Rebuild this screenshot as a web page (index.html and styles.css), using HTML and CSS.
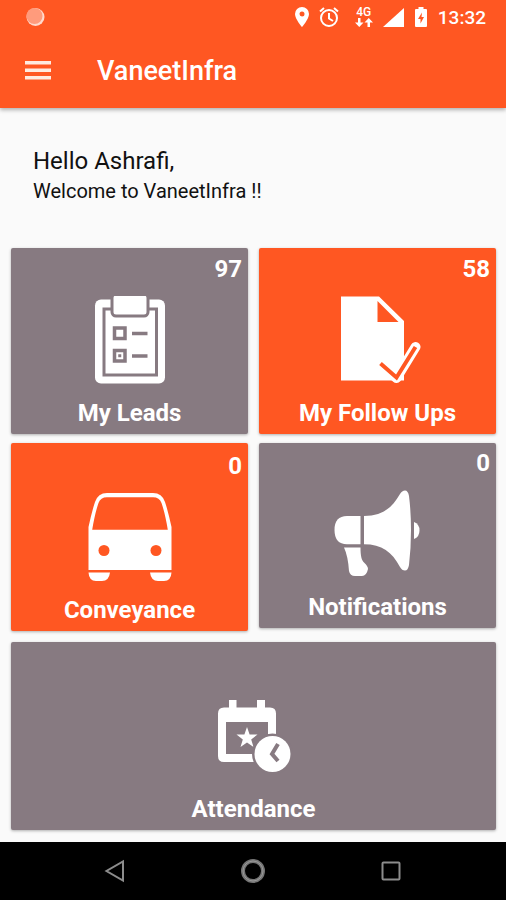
FILE: index.html
```html
<!DOCTYPE html>
<html lang="en">

<head>
    <meta charset="UTF-8">
    <meta name="viewport" content="width=device-width, initial-scale=1.0">
    <title>VaneetInfra</title>
    <link rel="stylesheet" href="styles.css">
</head>

<body>

    <header class="header">
        <div class="status-bar">
            <svg class="status-dot" width="20" height="20" viewBox="0 0 20 20">
                <circle cx="10.500" cy="10" r="9" fill="#ffd9cc"/>
                <circle cx="9.500" cy="9" r="8" fill="#ff9b7c"/>
            </svg>
            <div class="status-icons">
                <svg width="14" height="20" viewBox="0 0 14 20" fill="#fff">
                    <path fill-rule="evenodd" d="M7 0a7 7 0 0 0-7 7c0 5 7 13 7 13s7-8 7-13a7 7 0 0 0-7-7zm0 4.500a2.500 2.500 0 1 1 0 5 2.500 2.500 0 0 1 0-5z"/>
                </svg>
                <svg class="icon-alarm" width="20" height="20" viewBox="0 0 20 20" fill="none" stroke="#fff" stroke-width="2">
                    <circle cx="10" cy="11" r="8"/>
                    <path d="M10 6v5.500l4 2.500M1 4.500l4-3.500M19 4.500l-4-3.500"/>
                </svg>
                <span class="network">
                    <span>4G</span>
                    <svg width="18" height="9" viewBox="0 0 18 9" fill="#fff">
                        <path d="M3 0h2.500v4.500H8.500L4.250 9 0 4.500h3zM12.500 9H15V4.500h3L13.750 0 9.500 4.500h3z"/>
                    </svg>
                </span>
                <svg class="icon-signal" width="21" height="19" viewBox="0 0 21 19" fill="#fff">
                    <path d="M21 0v19H0z"/>
                </svg>
                <svg class="icon-battery" width="12" height="20" viewBox="0 0 12 20">
                    <path d="M3.500 0h5v2H11q1 0 1 1v16q0 1-1 1H1q-1 0-1-1V3q0-1 1-1h2.500z" fill="#fff"/>
                    <path d="M7 5.500 3 12h2.500v4.500L9 10H6.500z" fill="#ff5722"/>
                </svg>
                <span class="clock">13:32</span>
            </div>
        </div>
        <div class="app-bar">
            <button class="menu-button" type="button" aria-label="Menu">
                <svg width="26" height="20" viewBox="0 0 26 20" fill="#ffeae0">
                    <path d="M0 0h26v3.500H0zM0 7.500h26V11H0zM0 15h26v3.500H0z"/>
                </svg>
            </button>
            <h1>VaneetInfra</h1>
        </div>
    </header>

    <main>
        <div class="greeting">
            <p class="hello">Hello Ashrafi,</p>
            <p class="welcome">Welcome to VaneetInfra !!</p>
        </div>

        <div class="tiles">
            <a class="tile" href="#leads">
                <span class="count">97</span>
                <svg class="tile-icon" viewBox="0 0 88 88">
                    <rect x="9" y="3.500" width="70" height="84" rx="6" fill="#fff"/>
                    <rect x="18" y="13" width="52.500" height="66" fill="none" stroke="#877a81" stroke-width="3"/>
                    <rect x="26" y="-2" width="36" height="22" rx="4" fill="#fff" stroke="#877a81" stroke-width="3"/>
                    <path d="M20-4h48v4H20z" fill="#877a81"/>
                    <g fill="none" stroke="#877a81" stroke-width="3.500">
                        <rect x="28.500" y="32" width="10.500" height="10.500"/>
                        <rect x="28.500" y="54.500" width="10.500" height="10.500"/>
                        <path d="M46 37.500h15.500M46 60h15.500"/>
                    </g>
                    <rect x="32.250" y="58.250" width="3" height="3" fill="#877a81"/>
                </svg>
                <span class="label">My Leads</span>
            </a>

            <a class="tile orange" href="#followups">
                <span class="count">58</span>
                <svg class="tile-icon" viewBox="0 0 88 88">
                    <path fill="#fff" fill-rule="evenodd" d="M7 .5H45L70 25V84.500H7zM43.500 5v21h21z"/>
                    <path d="M48 69l14.500 13L81.500 51" fill="none" stroke="#fff" stroke-width="10" stroke-linecap="round" stroke-linejoin="round"/>
                    <path d="M46.500 67.500l16 14L81.500 51" fill="none" stroke="#ff5722" stroke-width="4"/>
                </svg>
                <span class="label">My Follow Ups</span>
            </a>

            <a class="tile orange tile-tall" href="#conveyance">
                <span class="count">0</span>
                <svg class="tile-icon" viewBox="0 0 88 88">
                    <path fill="#fff" fill-rule="evenodd" d="M2.500 77V34Q6 18 9 9Q12 0 21 0H67Q76 0 79 9Q82 18 85.500 34V77zM6.200 36.700H81.800Q79 20 75.500 10Q73.500 4.300 67 4.300H21Q14.500 4.300 12.500 10Q9 20 6.200 36.700z"/>
                    <circle cx="18" cy="57.500" r="5.500" fill="#ff5722"/>
                    <circle cx="70" cy="57.500" r="5.500" fill="#ff5722"/>
                    <path fill="#fff" d="M2.500 79.500H24Q23 88 16 88H10Q3 88 2.500 79.500zM64 79.500H85.500Q85 88 78 88H72Q65 88 64 79.500z"/>
                </svg>
                <span class="label">Conveyance</span>
            </a>

            <a class="tile tile-short" href="#notifications">
                <span class="count">0</span>
                <svg class="tile-icon" viewBox="0 0 88 88" fill="#fff">
                    <path d="M26.500 26H13Q.5 26 .5 40T13 54.300H26.500z"/>
                    <path d="M30 26C48 26 58 18 66 4Q68 .5 71 .5Q74 .5 75 6Q77 22 77 40T75 75Q74 80.500 71 80.500Q68 80.500 66 77C58 62 48 54.300 30 54.300z"/>
                    <path d="M80 32Q85.500 34 85.500 40.500T80 49z"/>
                    <path d="M10 57.500H26.500C26.500 66 27.500 70 30 72.500Q34 76 34 79Q32.500 86 28 86H21Q16 86 15 81Q14 66 10 57.500z"/>
                </svg>
                <span class="label">Notifications</span>
            </a>

            <a class="tile tile-wide" href="#attendance">
                <svg class="tile-icon" viewBox="0 0 88 88">
                    <path fill="#fff" fill-rule="evenodd" d="M19 8h7.500v7.500H47V8h8v7.500h5q6 0 6 6V64q0 6-6 6H14q-6 0-6-6V21.500q0-6 6-6h5zM16 30v32h42V30z"/>
                    <path fill="#fff" d="M37 35l2.600 7.400 7.900.2-6.300 4.800 2.300 7.600L37 50.500 30.500 55l2.300-7.600-6.300-4.800 7.900-.2z"/>
                    <circle cx="62.500" cy="62" r="20.500" fill="#877a81"/>
                    <circle cx="62.500" cy="62" r="18" fill="#fff"/>
                    <path d="M68 52l-6 10 6 7" fill="none" stroke="#877a81" stroke-width="4"/>
                </svg>
                <span class="label">Attendance</span>
            </a>
        </div>
    </main>

    <nav class="nav-bar">
        <button type="button" aria-label="Back">
            <svg width="26" height="26" viewBox="0 0 26 26"><path d="M21 3.500v19L4.500 13z"/></svg>
        </button>
        <button type="button" aria-label="Home">
            <svg width="26" height="26" viewBox="0 0 26 26">
                <circle cx="13" cy="13" r="10" stroke="#757575" stroke-width="4"/>
                <circle cx="13" cy="13" r="10" stroke="#999" stroke-width="1"/>
            </svg>
        </button>
        <button type="button" aria-label="Recent apps">
            <svg width="26" height="26" viewBox="0 0 26 26"><rect x="4.500" y="4.500" width="17" height="17" rx="1"/></svg>
        </button>
    </nav>

</body>

</html>
```

FILE: styles.css
```css
* {
    box-sizing: border-box;
}

body {
    font-family: Roboto, sans-serif;
    background-color: #fafafa;
    margin: 0;
    min-height: 100vh;
    display: flex;
    flex-direction: column;
}

svg {
    display: block;
    flex-shrink: 0;
}

button {
    background: none;
    border: none;
    padding: 0;
    cursor: pointer;
}

.header {
    background-color: #ff5722;
    color: white;
    box-shadow: 0 2px 4px rgba(0, 0, 0, 0.3);
}

.status-bar {
    display: flex;
    justify-content: space-between;
    align-items: center;
    height: 34px;
    padding: 0 20px 0 25px;
}

.status-icons {
    display: flex;
    align-items: center;
}

.icon-alarm {
    margin-left: 10px;
}

.network {
    display: flex;
    flex-direction: column;
    align-items: center;
    margin-left: 16px;
    font-size: 12px;
    font-weight: 500;
    line-height: 11px;
}

.icon-signal {
    margin-left: 10px;
}

.icon-battery {
    margin-left: 11px;
}

.clock {
    margin-left: 11px;
    font-size: 19px;
    font-weight: 500;
}

.app-bar {
    display: flex;
    align-items: center;
    height: 74px;
    padding: 0 25px;
}

.app-bar h1 {
    margin: 0 0 0 46px;
    font-size: 27px;
    font-weight: 500;
    line-height: 32px;
}

.greeting {
    padding: 37px 33px 43px;
    color: #111;
}

.greeting p {
    margin: 0;
}

.hello {
    font-size: 24px;
    line-height: 32px;
}

.welcome {
    font-size: 20px;
    line-height: 28px;
}

.tiles {
    display: grid;
    grid-template-columns: 1fr 1fr;
    align-items: start;
    gap: 9px 11px;
    padding: 0 10px 12px 11px;
}

.tile {
    display: flex;
    flex-direction: column;
    align-items: center;
    padding: 7px 6px;
    background-color: #877a81;
    border-radius: 2px;
    box-shadow: 0 1px 3px rgba(0, 0, 0, 0.3);
    color: white;
    font-size: 24px;
    font-weight: 700;
    line-height: 28px;
    text-decoration: none;
}

.orange {
    background-color: #ff5722;
}

.tile-tall {
    padding-top: 9px;
}

.tile-short {
    padding-top: 6px;
}

.tile-wide {
    grid-column: 1 / -1;
    margin-top: 2px;
    padding-top: 37px;
}

.count {
    align-self: flex-end;
}

.tile-icon {
    width: 88px;
    height: 88px;
    margin: 13px 0 15px;
}

.nav-bar {
    display: flex;
    justify-content: space-around;
    align-items: center;
    height: 58px;
    margin-top: auto;
    padding: 0 9%;
    background-color: black;
}

.nav-bar svg {
    fill: none;
    stroke: #8c8c8c;
    stroke-width: 2;
}
```
